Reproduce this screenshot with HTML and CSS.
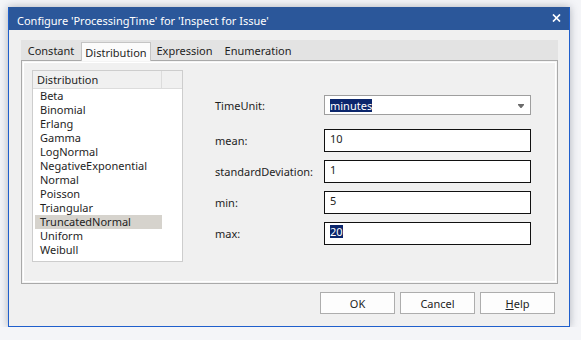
FILE: index.html
```html
<!DOCTYPE html>
<html lang="en">
<head>
  <meta charset="UTF-8">
  <title>Configure ProcessingTime</title>
  <link rel="stylesheet" href="styles.css">
</head>
<body>
  <div class="window">
    <div class="titlebar">
      <span class="title">Configure 'ProcessingTime' for 'Inspect for Issue'</span>
      <svg class="close" width="9" height="8" viewBox="0 0 9 8">
        <path d="M1 0.5 L8 7.5 M8 0.5 L1 7.5" stroke="#fff" stroke-width="1.7" fill="none"/>
      </svg>
    </div>
    <div class="content">
      <div class="tabs">
        <div class="tab tab-constant">Constant</div>
        <div class="tab tab-distribution active">Distribution</div>
        <div class="tab tab-expression">Expression</div>
        <div class="tab tab-enumeration">Enumeration</div>
      </div>
      <div class="page">
        <div class="listbox">
          <div class="list-header">
            <div class="col-main">Distribution</div>
            <div class="col-extra"></div>
          </div>
          <ul class="list-items">
            <li>Beta</li>
            <li>Binomial</li>
            <li>Erlang</li>
            <li>Gamma</li>
            <li>LogNormal</li>
            <li>NegativeExponential</li>
            <li>Normal</li>
            <li>Poisson</li>
            <li>Triangular</li>
            <li class="selected">TruncatedNormal</li>
            <li>Uniform</li>
            <li>Weibull</li>
          </ul>
        </div>
        <div class="form">
          <div class="field field-first">
            <label>TimeUnit:</label>
            <div class="combo">
              <span class="highlight">minutes</span>
              <svg class="arrow" width="6" height="4" viewBox="0 0 6 4">
                <path d="M0 0 H6 V1 L3.5 4 H2.5 L0 1 Z" fill="#6b6b6b"/>
              </svg>
            </div>
          </div>
          <div class="field">
            <label>mean:</label>
            <div class="textbox">10</div>
          </div>
          <div class="field">
            <label>standardDeviation:</label>
            <div class="textbox">1</div>
          </div>
          <div class="field">
            <label>min:</label>
            <div class="textbox">5</div>
          </div>
          <div class="field">
            <label>max:</label>
            <div class="textbox"><span class="highlight">20</span></div>
          </div>
        </div>
      </div>
      <div class="buttons">
        <button>OK</button>
        <button>Cancel</button>
        <button><u>H</u>elp</button>
      </div>
    </div>
  </div>
</body>
</html>
```

FILE: styles.css
```css
body { margin: 0; padding: 7px 0 0 8px; background: #f4f5f8; font-family: "Noto Sans", sans-serif; font-size: 11px; color: #1e1e1e; }

.window { width: 562px; height: 320px; box-sizing: border-box; border: 1px solid #1f5fcc; border-top-color: #2b579a; background: #f0f0f0; box-shadow: 0 0 8px rgba(40, 50, 70, 0.35); display: flex; flex-direction: column; }

.titlebar { height: 22px; box-sizing: border-box; padding: 4px 0 0 8px; background: #2b579a; color: #fff; line-height: 18px; display: flex; justify-content: space-between; }
.close { margin: 2px 8px 0 0; }

.content { padding: 10px 11px 0 12px; }

.tabs { display: flex; align-items: flex-end; height: 20px; background: #e3e3e3; }
.tab { height: 20px; box-sizing: border-box; padding-top: 2px; line-height: 18px; text-align: center; }
.tab-constant { width: 60px; }
.tab-distribution { width: 70px; }
.tab-expression { width: 67px; }
.tab-enumeration { width: 80px; }
.tab.active { height: 19px; padding-top: 1px; line-height: 17px; background: #fbfbfb; border: 1px solid #c4c4c4; border-bottom: none; margin-bottom: -1px; position: relative; z-index: 1; }

.page { height: 224px; box-sizing: border-box; border: 1px solid #a9a9a9; box-shadow: inset 0 0 0 1px #f4f4f4, inset 0 0 0 2px #fff; padding: 9px 0 0 10px; display: flex; }

.listbox { width: 151px; height: 192px; box-sizing: border-box; border: 1px solid #cdcdcd; background: #fff; }
.list-header { display: flex; height: 18px; box-sizing: border-box; border-bottom: 1px solid #dcdcdc; background: #f0f0f0; line-height: 17px; }
.col-main { width: 129px; box-sizing: border-box; padding-left: 4px; border-right: 1px solid #dcdcdc; }
.col-extra { flex: 1; }
.list-items { list-style: none; margin: 0; padding: 0 0 0 2px; }
.list-items li { width: 127px; height: 14px; box-sizing: border-box; padding-left: 5px; line-height: 14px; }
.list-items li.selected { background: #d6d3cd; }

.form { margin: 25px 0 0 32px; }
.field { display: flex; align-items: center; margin-bottom: 8px; }
.field-first { margin-bottom: 14px; }
.field label { width: 109px; }
.combo { width: 207px; height: 20px; box-sizing: border-box; border: 1px solid #9e9e9e; background: #fff; padding: 0 6px 0 5px; display: flex; align-items: center; justify-content: space-between; }
.textbox { width: 207px; height: 23px; box-sizing: border-box; border: 1px solid #111; background: #fff; padding: 1px 5px 0; line-height: 15px; }
.highlight { background: #0b266c; color: #fff; line-height: 13px; display: inline-block; }
.arrow { margin-top: 1px; }

.buttons { display: flex; justify-content: flex-end; gap: 5px; margin: 8px 3px 0 0; }
.buttons button { width: 75px; height: 22px; box-sizing: border-box; border: 1px solid #adadad; background: #fdfdfd; font-family: "Noto Sans", sans-serif; font-size: 11px; color: #1e1e1e; padding: 0; }
```
